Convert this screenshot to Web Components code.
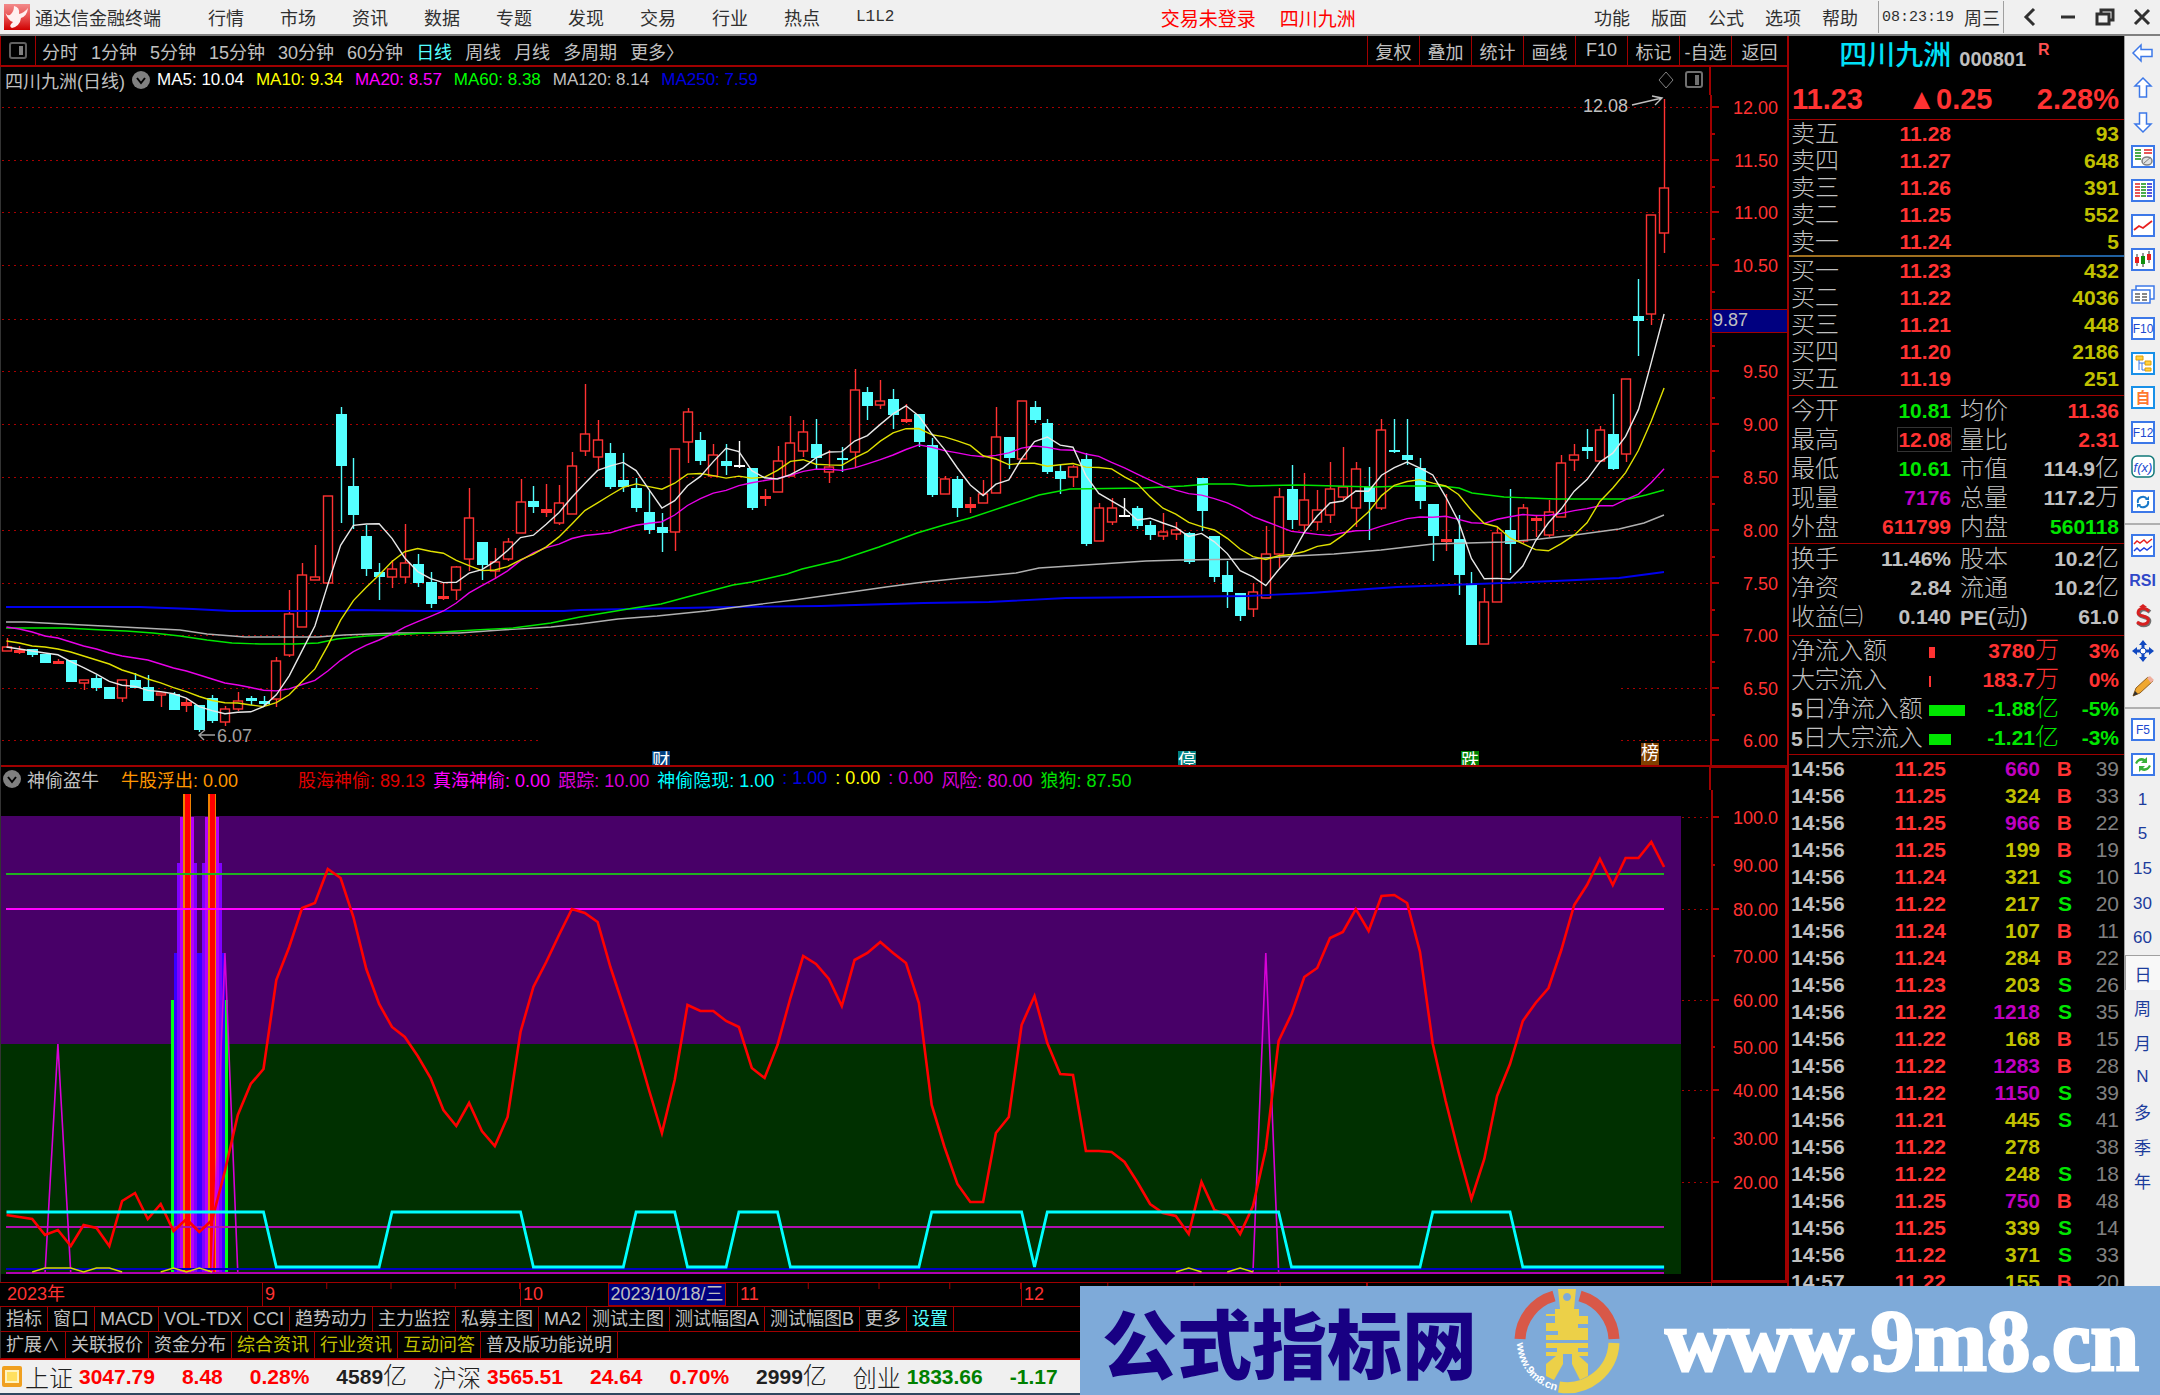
<!DOCTYPE html>
<html lang="zh-CN">
<head>
<meta charset="utf-8">
<title>通达信金融终端</title>
<style>
    html, body {
        margin: 0;
        height: 100%;
        background: #000;
    }
    body {
        font-family: "Liberation Sans", "Noto Sans CJK SC", sans-serif;
        font-size: 18px;
        color: #c0c0c0;
        overflow: hidden;
    }
</style>
</head>
<body>
<tdx-app>
    <app-menu slot="menu"></app-menu>
    <period-bar slot="chart"></period-bar>
    <price-chart slot="chart"></price-chart>
    <signal-chart slot="chart"></signal-chart>
    <date-axis slot="chart"></date-axis>
    <tab-strip slot="chart" items="指标,窗口,MACD,VOL-TDX,CCI,趋势动力,主力监控,私募主图,MA2,测试主图,测试幅图A,测试幅图B,更多,*设置"></tab-strip>
    <tab-strip slot="chart" items="扩展∧,关联报价,资金分布,+综合资讯,+行业资讯,+互动问答,普及版功能说明"></tab-strip>
    <quote-panel slot="quote"></quote-panel>
    <tool-rail slot="rail"></tool-rail>
    <index-bar slot="status"></index-bar>
    <site-banner slot="banner"></site-banner>
</tdx-app>

<script>
// 公共样式
const BASE = `
    :host, * { box-sizing: border-box; }
    * { margin: 0; padding: 0; }
    button { font: inherit; color: inherit; background: none; border: 0; white-space: nowrap; cursor: pointer; }
    a { color: inherit; text-decoration: none; }
    svg { display: block; }
`;

// 基类:子类提供 css() 和 html()
class BaseElement extends HTMLElement {
    constructor() {
        super();
        this.attachShadow({ mode: 'open' });
    }
    connectedCallback() {
        this.shadowRoot.innerHTML = `<style>${BASE}${this.css()}</style>${this.html()}`;
    }
}

// ---------- 整体布局 ----------
class TdxApp extends BaseElement {
    css() {
        return `
            :host { display: flex; flex-direction: column; height: 100vh; position: relative; overflow: hidden; }
            main { flex: 1; min-height: 0; display: grid; grid-template-columns: minmax(0, 1fr) 337px 36px; }
            .left { display: flex; flex-direction: column; min-height: 0; }
        `;
    }
    html() {
        return `
            <slot name="menu"></slot>
            <main>
                <div class="left"><slot name="chart"></slot></div>
                <slot name="quote"></slot>
                <slot name="rail"></slot>
            </main>
            <slot name="status"></slot>
            <slot name="banner"></slot>
        `;
    }
}

// ---------- 顶部菜单 ----------
class AppMenu extends BaseElement {
    css() {
        return `
            :host { display: flex; align-items: center; height: 36px; flex: none; background: #f0f0f0; color: #303030; border-bottom: 2px solid #808080; padding: 0 6px 0 4px; }
            .logo { width: 26px; height: 26px; margin-right: 5px; }
            .title { margin-right: 47px; white-space: nowrap; }
            nav { display: flex; gap: 36px; }
            .code { font-family: "Liberation Mono", monospace; font-size: 16px; }
            .login { flex: 1; display: flex; justify-content: center; gap: 24px; color: #f00; font-size: 19px; padding-left: 28px; }
            .right { gap: 21px; }
            .clock { display: flex; align-items: center; gap: 10px; margin-left: 20px; height: 32px; padding: 0 3px; border: solid #a0a0a0; border-width: 0 1px; white-space: nowrap; }
            .clock time { font-family: "Liberation Mono", monospace; font-size: 15px; }
            .win { display: flex; gap: 13px; margin-left: 15px; }
            .win button { width: 24px; height: 24px; }
            .win svg { fill: none; stroke: #303030; stroke-width: 3; }
        `;
    }
    html() {
        const btn = t => `<button>${t}</button>`;
        return `
            <svg class="logo" viewBox="0 0 26 26">
                <defs><linearGradient id="g" x2="0" y2="1"><stop offset="0" stop-color="#f28a8a"/><stop offset=".5" stop-color="#e85050"/><stop offset="1" stop-color="#d00000"/></linearGradient></defs>
                <rect width="26" height="26" fill="url(#g)"/>
                <path d="M1 7 Q2 12 6 11 Q10 8 10 2 Q16 3 15 10 Q20 9 24 4 Q23 12 17 14 Q16 22 8 24 Q4 22 9 18 Q3 16 1 7Z" fill="#fff0f0"/>
            </svg>
            <span class="title">通达信金融终端</span>
            <nav>${['行情', '市场', '资讯', '数据', '专题', '发现', '交易', '行业', '热点'].map(btn).join('')}<button class="code">L1L2</button></nav>
            <div class="login"><button>交易未登录</button><button>四川九洲</button></div>
            <nav class="right">${['功能', '版面', '公式', '选项', '帮助'].map(btn).join('')}</nav>
            <div class="clock"><time>08:23:19</time><span>周三</span></div>
            <div class="win">
                <button aria-label="后退"><svg viewBox="0 0 24 24"><path d="M15 4 L7 12 L15 20"/></svg></button>
                <button aria-label="最小化"><svg viewBox="0 0 24 24"><path d="M5 12 H19"/></svg></button>
                <button aria-label="还原"><svg viewBox="0 0 24 24"><path d="M4 9 H16 V19 H4Z M8 9 V5 H20 V15 H16"/></svg></button>
                <button aria-label="关闭"><svg viewBox="0 0 24 24"><path d="M5 5 L19 19 M19 5 L5 19"/></svg></button>
            </div>
        `;
    }
}

// ---------- 周期工具条 ----------
class PeriodBar extends BaseElement {
    css() {
        return `
            :host { display: flex; justify-content: space-between; height: 31px; flex: none; border: solid #a00000; border-width: 0 0 2px 1px; }
            .periods { display: flex; align-items: center; gap: 13px; }
            .panel { width: 35px; align-self: stretch; border-right: 1px solid #a00000; margin-right: -7px; display: grid; place-items: center; }
            .on { color: #54ffff; }
            .tools { display: flex; }
            .tools button { width: 52px; border-left: 1px solid #a00000; }
            .tools button:last-child { width: 56px; }
        `;
    }
    html() {
        const periods = ['分时', '1分钟', '5分钟', '15分钟', '30分钟', '60分钟', '日线', '周线', '月线', '多周期', '更多〉'];
        return `
            <div class="periods">
                <button class="panel" aria-label="侧栏"><svg width="20" height="18" viewBox="0 0 20 18"><rect x="2" y="1" width="16" height="15" rx="2" fill="none" stroke="#606060" stroke-width="2"/><path d="M11 4h4v9h-4z" fill="#808080"/></svg></button>
                ${periods.map(p => `<button class="${p === '日线' ? 'on' : ''}">${p}</button>`).join('')}
            </div>
            <div class="tools">${['复权', '叠加', '统计', '画线', 'F10', '标记', '-自选', '返回'].map(t => `<button>${t}</button>`).join('')}</div>
        `;
    }
}

// K线:[最高, 实体上沿, 实体下沿, 最低, 类型],均为画布纵坐标
// r 阳线空心 R 阳线小实体 c 阴线 w 平盘
const BARS = `638,647,651,651,r 646,650,652,654,R 649,649,654,657,c 654,654,662,662,c 659,661,663,664,R 660,660,681,681,c
680,680,683,690,r 675,678,687,691,c 687,687,698,698,c 680,680,698,702,r 673,680,687,687,c 675,687,700,700,c
693,693,695,707,r 692,694,709,709,c 698,702,705,712,R 705,705,729,732,c 695,698,720,723,c 706,709,722,726,r
692,701,709,711,r 696,698,700,705,c 696,701,703,706,c 657,661,699,707,r 590,614,655,657,r 563,575,627,627,r
545,577,580,580,r 496,496,583,583,r 407,414,465,523,c 458,486,514,529,c 525,536,568,576,c 563,572,576,600,c
560,569,577,588,r 524,563,577,583,r 554,564,582,587,c 572,582,603,608,c 583,596,598,600,R 566,567,590,600,r
488,518,559,571,r 542,542,564,580,c 548,562,571,579,r 538,542,559,561,r 479,502,533,533,r 486,501,506,513,c
484,509,512,517,R 485,503,523,525,r 452,466,514,514,r 384,434,451,456,r 420,440,457,469,r 443,453,486,489,c
453,480,486,492,c 478,488,507,512,c 491,512,529,534,c 513,527,532,552,c 449,449,532,551,r 408,412,442,463,r
432,440,460,465,c 444,455,476,476,r 444,461,465,475,c 441,465,466,468,w 468,468,507,510,c 489,496,498,506,R
446,461,492,492,r 416,443,476,476,r 420,432,451,457,r 419,444,457,470,c 450,467,472,483,r 447,458,459,472,c
369,390,452,468,r 387,392,405,420,c 380,401,405,409,r 389,399,414,429,c 404,419,421,423,R 414,414,441,447,c
438,445,494,497,c 476,479,494,494,r 476,479,507,517,c 497,504,507,513,R 480,494,503,503,r 407,437,493,493,r
437,437,457,469,c 401,401,459,459,r 401,407,419,423,c 419,423,471,474,c 465,471,478,494,c 465,467,477,487,r
453,459,543,546,c 503,508,541,541,r 498,508,522,525,r 498,515,516,516,w 506,508,525,529,c 521,525,534,540,c
513,532,536,540,r 522,530,534,540,r 532,533,561,564,c 478,478,510,531,c 536,536,576,582,c 561,575,591,608,c
593,593,615,621,c 583,592,609,617,r 526,554,598,598,r 488,497,554,568,r 465,489,519,529,c 473,500,525,531,r
490,510,522,530,r 462,489,515,523,r 447,487,497,500,r 462,469,508,527,r 467,487,501,540,c 419,430,508,510,r
419,450,451,453,c 419,455,459,465,c 458,468,500,509,c 504,504,535,561,c 494,539,541,551,R 515,539,574,595,c
572,585,644,644,c 588,602,644,644,r 527,533,602,602,r 489,530,543,573,c 504,508,541,543,r 515,518,520,537,R
500,512,535,537,r 455,463,517,517,r 444,455,460,471,r 429,447,450,459,c 426,430,461,461,r 394,434,468,470,c
379,379,454,462,r 279,316,320,356,c 215,215,314,325,r 99,188,233,253,r`.split(/\s+/).map(s => {
    const p = s.split(',');
    return { hi: +p[0], top: +p[1], bottom: +p[2], lo: +p[3], kind: p[4] };
});

const STEP = 12.85;
const barX = i => 6.5 + i * STEP;

// 由收盘价计算均线,lead 为前面不足周期的部分
function average(n, lead) {
    const close = BARS.map(b => b.kind === 'c' || b.kind === 'w' ? b.bottom : b.top);
    return close.map((_, i) => {
        const y = i < n - 1 ? lead[i] : close.slice(i - n + 1, i + 1).reduce((a, b) => a + b) / n;
        return `${barX(i).toFixed(1)},${y.toFixed(1)}`;
    }).join(' ');
}

const line = (points, color, width = 1.4) => `<polyline points="${points}" fill="none" stroke="${color}" stroke-width="${width}"/>`;

const CHART_CSS = `
    :host { display: flex; flex-direction: column; min-height: 0; border-left: 1px solid #333; }
    header { display: flex; flex: none; }
    .legend { flex: 1; display: flex; align-items: center; padding-left: 4px; white-space: nowrap; }
    .axis-top { width: 76px; }
    svg.plot { flex: 1; min-height: 0; width: 100%; overflow: hidden; }
    text { font-size: 18px; }
    .crisp { shape-rendering: crispEdges; }
`;
const CHEVRON = `<svg width="18" height="18" viewBox="0 0 18 18"><circle cx="9" cy="9" r="9" fill="#808080"/><path d="M5 7 L9 12 L13 7" fill="none" stroke="#000" stroke-width="2"/></svg>`;

// ---------- 主图 ----------
class PriceChart extends BaseElement {
    css() {
        return CHART_CSS + `
            :host { flex: 698 1 0; }
            header { height: 28px; }
            .legend { gap: 12px; font-size: 17px; padding-bottom: 2px; border-right: 2px solid #a00000; }
            .name { font-size: 18px; }
            .legend button { margin: 0 -5px; }
            .corner { margin-left: auto; display: flex; gap: 9px; padding-right: 5px; }
        `;
    }
    grid() {
        const levels = [['12.00', 107], ['11.50', 160], ['11.00', 212], ['10.50', 265], ['', 319], ['9.50', 371], ['9.00', 424], ['8.50', 477], ['8.00', 530], ['7.50', 583], ['7.00', 635], ['6.50', 688], ['6.00', 740]];
        return levels.map(([label, y]) => {
            const d = y < 650 ? `M2 ${y}H1710` : `M2 ${y}H538 M1621 ${y}H1710`;
            return `<path class="crisp" d="${d}" stroke="#a80000" stroke-width="1" stroke-dasharray="2 4"/>
                <path class="crisp" d="M1711 ${y}h8 M1711 ${y + 27}h4" stroke="#b00000" stroke-width="2"/>
                ${label ? `<text x="1778" y="${y + 7}" text-anchor="end" fill="#ff3232">${label}</text>` : ''}`;
        }).join('');
    }
    bars() {
        const colors = { r: '#ff3232', R: '#ff3232', c: '#54ffff', w: '#fff' };
        return BARS.map((b, i) => {
            const x = Math.round(barX(i));
            const c = colors[b.kind];
            const h = Math.max(b.bottom - b.top, 1);
            const body = b.kind === 'r'
                ? `<rect x="${x - 4.5}" y="${b.top}" width="9" height="${h}" fill="#000" stroke="${c}" stroke-width="1.4"/>`
                : `<rect x="${x - 5}" y="${b.top}" width="11" height="${h + 1}" fill="${c}"/>`;
            return `<path d="M${x + .5} ${b.hi}V${b.lo}" stroke="${c}" stroke-width="1.4"/>${body}`;
        }).join('');
    }
    html() {
        const mas = [['MA5: 10.04', '#fff'], ['MA10: 9.34', '#ff0'], ['MA20: 8.57', '#f0f'], ['MA60: 8.38', '#0f0'], ['MA120: 8.14', '#c0c0c0'], ['MA250: 7.59', '#0000e0']];
        const marks = [['财', 652, 751, '#00407f'], ['停', 1178, 751, '#008080'], ['跌', 1461, 751, '#008000'], ['榜', 1641, 743, '#804000']];
        return `
            <header>
                <div class="legend">
                    <span class="name">四川九洲(日线)</span><button aria-label="展开">${CHEVRON}</button>
                    ${mas.map(([t, c]) => `<span style="color:${c}">${t}</span>`).join('')}
                    <div class="corner">
                        <svg width="18" height="20" viewBox="0 0 18 20"><path d="M9 2 L16 10 L9 18 L2 10Z" fill="none" stroke="#808080"/></svg>
                        <svg width="20" height="20" viewBox="0 0 20 20"><rect x="2" y="2" width="16" height="15" rx="2" fill="none" stroke="#707070" stroke-width="2"/><path d="M11 5h4v10h-4z" fill="#707070"/></svg>
                    </div>
                </div>
                <div class="axis-top"></div>
            </header>
            <svg class="plot" viewBox="1 95 1786 670">
                ${this.grid()}
                <path class="crisp" d="M1711 95V765" stroke="#a00000" stroke-width="2"/>
                ${this.bars()}
                ${line('6,607 140,607 193,609 231,611 346,611 352,610 425,611 564,611 580,610 733,607 821,606 924,603 989,602 1066,598 1156,597 1247,596 1310,593 1397,587 1476,584 1555,581 1619,578 1664,572', '#0000ee', 1.8)}
                ${line('6,622 25,622 63,624 103,626 142,628 180,630 207,634 245,637 318,637 344,635 398,633 459,633 501,630 551,627 580,624 618,619 657,616 706,611 745,606 794,600 844,593 886,587 924,582 963,578 1016,573 1039,568 1085,565 1146,561 1180,560 1251,559 1294,556 1334,554 1381,550 1433,544 1504,542 1540,539 1575,535 1619,529 1644,523 1664,515', '#b0b0b0')}
                ${line('6,628 65,628 103,630 126,631 153,633 180,636 207,640 232,643 260,644 295,644 318,643 337,639 367,636 409,634 475,630 513,628 551,623 580,617 616,611 634,608 661,604 687,597 733,585 752,582 787,574 802,569 840,560 879,547 917,533 944,525 970,518 1009,505 1039,495 1070,489 1143,488 1184,486 1209,484 1233,484 1249,486 1298,485 1374,487 1405,486 1441,486 1459,488 1472,493 1504,497 1555,499 1629,499 1646,495 1664,490', '#00e600')}
                ${line(average(20, [627, 629, 632, 636, 638, 642, 646, 649, 653, 656, 658, 660, 664, 668, 671, 675, 679, 683, 685]), '#e800e8')}
                ${line(average(10, [641, 643, 646, 647, 649, 652, 656, 660, 664]), '#e0e000')}
                ${line(average(5, [647, 649, 651, 653]), '#e8e8e8')}
                <text x="1583" y="112" fill="#c0c0c0">12.08</text>
                <path d="M1632 105 L1662 98 M1652 96 L1662 98 L1655 105" fill="none" stroke="#c0c0c0" stroke-width="1.4"/>
                <text x="217" y="742" fill="#a0a0a0">6.07</text>
                <path d="M215 735 H199 M205 730 L199 735 L204 740" fill="none" stroke="#a0a0a0" stroke-width="1.4"/>
                <rect class="crisp" x="1711" y="309" width="77" height="23" fill="#000080" stroke="#a00000"/>
                <text x="1713" y="326" fill="#c0c0c0">9.87</text>
                ${marks.map(([t, x, y, c]) => `<rect x="${x}" y="${y}" width="18" height="22" fill="${c}"/><text x="${x}" y="${y + 16}" fill="#fff">${t}</text>`).join('')}
            </svg>
        `;
    }
}

// ---------- 副图指标 ----------
const TREND = [1215, 1217, 1219, 1235, 1230, 1246, 1225, 1228, 1246, 1201, 1193, 1219, 1204, 1231, 1219, 1232, 1220, 1171, 1115, 1084,
    1069, 980, 947, 908, 903, 869, 878, 917, 969, 1004, 1027, 1037, 1056, 1078, 1110, 1126, 1103, 1131, 1146, 1117,
    1032, 987, 962, 935, 909, 913, 922, 967, 1006, 1045, 1090, 1133, 1080, 1005, 1011, 1011, 1021, 1027, 1068, 1078,
    1045, 998, 956, 964, 979, 1006, 960, 953, 942, 953, 963, 1003, 1105, 1147, 1184, 1202, 1202, 1133, 1117, 1025,
    996, 1043, 1074, 1075, 1151, 1151, 1152, 1162, 1182, 1204, 1213, 1216, 1234, 1182, 1210, 1215, 1234, 1206, 1149, 1041,
    1014, 977, 968, 938, 932, 909, 931, 896, 895, 903, 952, 1044, 1101, 1152, 1199, 1159, 1096, 1064, 1021, 1003,
    988, 950, 905, 885, 859, 885, 858, 858, 842, 867];
// 神偷隐现为高位的区间(K线序号)
const HIGH_RANGES = [[0, 20], [30, 40], [49, 52], [57, 60], [72, 79], [81, 99], [111, 117]];

class SignalChart extends BaseElement {
    css() {
        return CHART_CSS + `
            :host { flex: 517 1 0; }
            header { height: 25px; border-top: 2px solid #a00000; }
            .legend { gap: 8px; border-right: 2px solid #a00000; padding-left: 2px; }
            .legend button { margin-right: -2px; }
            .first { margin: 0 52px 0 14px; }
            .axis-top { border-top: 1px solid #a00000; border-right: 2px solid #a00000; }
        `;
    }
    switchLine() {
        return TREND.map((_, i) => {
            const on = HIGH_RANGES.some(([a, b]) => i >= a && i <= b);
            return `${barX(i).toFixed(1)},${on ? 1212 : 1267}`;
        }).join(' ');
    }
    spikes() {
        return [[4, 1044], [17, 953], [98, 953]].map(([i, y]) =>
            line(`${barX(i - 1)},1273 ${barX(i)},${y} ${barX(i + 1)},1273`, '#d800d8', 1.6)).join('');
    }
    columns() {
        const r = (x, y, w, c) => `<rect x="${x}" y="${y}" width="${w}" height="${1274 - y}" fill="${c}"/>`;
        return r(171, 1000, 57, '#00ff18') + r(174, 953, 51, '#3800ff') +
            [187, 212].map(x => r(x - 10, 863, 20, '#8000ff') + r(x - 7, 817, 14, '#b800f8') + r(x - 4, 794, 8, '#f08000') + r(x - 2, 794, 5, '#ff0000')).join('');
    }
    html() {
        const items = [['牛股浮出: 0.00', '#ff9600', 'first'], ['股海神偷: 89.13', '#e00000'], ['真海神偷: 0.00', '#f0f'], ['跟踪: 10.00', '#d800d8'], ['神偷隐现: 1.00', '#0ff'], [': 1.00', '#0000e0'], [': 0.00', '#ff0'], [': 0.00', '#d800d8'], ['风险: 80.00', '#d800d8'], ['狼狗: 87.50', '#00e000']];
        const axis = [['100.0', 817], ['90.00', 865], ['80.00', 909], ['70.00', 956], ['60.00', 1000], ['50.00', 1047], ['40.00', 1090], ['30.00', 1138], ['20.00', 1182]];
        const bumps = [[[2, 0], [3, 1], [5, 1], [6, 0], [7, 1], [8, 1], [9, 0]], [[12, 0], [13, 1], [14, 0], [15, 1], [16, 0]], [[91, 0], [92, 1], [93, 0]], [[95, 0], [96, 1], [97, 0]]];
        return `
            <header>
                <div class="legend"><button aria-label="展开">${CHEVRON}</button><span>神偷盗牛</span>
                ${items.map(([t, c, k]) => `<span class="${k || ''}" style="color:${c}">${t}</span>`).join('')}</div>
                <div class="axis-top"></div>
            </header>
            <svg class="plot" viewBox="1 790 1786 492">
                <path d="M1 816H1681V1044H1" fill="#480068"/>
                <path d="M1 1044H1681V1274H1" fill="#003000"/>
                ${axis.map(([t, y], i) => `<path class="crisp" d="M1711 ${y}h${i % 2 ? 4 : 8}" stroke="#b00000" stroke-width="2"/>
                    ${i % 2 ? '' : `<path class="crisp" d="M1682 ${y}H1710" stroke="#a80000" stroke-dasharray="2 4"/>`}
                    <text x="1778" y="${y + 7}" text-anchor="end" fill="#ff3232">${t}</text>`).join('')}
                ${this.columns()}
                <g class="crisp" fill="none">
                    <path d="M6 874H1664" stroke="#20b020" stroke-width="2"/>
                    <path d="M6 909H1664" stroke="#f0f" stroke-width="2"/>
                    <path d="M6 1227H1664" stroke="#b010b0" stroke-width="2"/>
                </g>
                ${this.spikes()}
                <path class="crisp" d="M6 1269H1664" stroke="#0000c0" stroke-width="2"/>
                <path class="crisp" d="M6 1273H1664" stroke="#b000b0" stroke-width="2"/>
                ${bumps.map(b => line(b.map(([i, on]) => `${barX(i)},${on ? 1268 : 1272}`).join(' '), '#d8d800')).join('')}
                ${line(TREND.map((y, i) => `${barX(i).toFixed(1)},${y}`).join(' '), '#ff0000', 2.6)}
                ${line(this.switchLine(), '#00ffff', 2.8)}
                <path class="crisp" d="M1712 790V1281H1786V790" fill="none" stroke="#a00000" stroke-width="2"/>
            </svg>
        `;
    }
}

// ---------- 日期轴 ----------
class DateAxis extends BaseElement {
    css() {
        return `
            :host { display: grid; grid-template-columns: 262px 258px 88px 118px 11px 284px 346px 1fr 76px; height: 25px; flex: none; border: solid #a00000; border-width: 1px 0; color: #ff3232; line-height: 23px; }
            span { border-left: 1px solid #a00000; padding-left: 2px; }
            .start { border: 0; padding-left: 7px; }
            .gap { border: 0; }
            .weeks { background: linear-gradient(90deg, transparent calc(100% - 1px), #a00000 0) 0 0 / 25% 6px repeat-x; }
            .cursor { border: 1px solid #a00000; background: #000080; color: #c0c0c0; line-height: 20px; padding: 0; white-space: nowrap; text-align: center; }
        `;
    }
    html() {
        return `<span class="start">2023年</span><span class="weeks">9</span><span>10</span><span class="cursor">2023/10/18/三</span><span class="gap"></span><span class="weeks">11</span><span class="weeks">12</span><span></span><span></span>`;
    }
}

// ---------- 标签条,* 为选中,+ 为高亮 ----------
class TabStrip extends BaseElement {
    css() {
        return `
            :host { display: flex; height: 25px; flex: none; border-bottom: 1px solid #a00000; border-left: 1px solid #333; }
            :host(:last-of-type) { height: 27px; }
            button { padding: 0 5px; border-right: 1px solid #a00000; line-height: 24px; }
            .on { color: #54ffff; }
            .hot { color: #c0c000; }
        `;
    }
    html() {
        return this.getAttribute('items').split(',').map(t => {
            const cls = t[0] === '*' ? 'on' : t[0] === '+' ? 'hot' : '';
            return `<button class="${cls}">${t.replace(/^[*+]/, '')}</button>`;
        }).join('');
    }
}

// ---------- 右侧报价 ----------
class QuotePanel extends BaseElement {
    css() {
        return `
            :host { display: block; min-height: 0; overflow: hidden; border-left: 2px solid #a00000; }
            .head { height: 84px; padding: 0 5px 0 3px; border-bottom: 1px solid #a00000; }
            h1 { display: flex; justify-content: center; align-items: flex-start; gap: 8px; height: 43px; padding-right: 22px; font-size: 28px; line-height: 40px; font-weight: 500; color: #00e0f8; }
            h1 small { font-size: 20px; line-height: 46px; font-weight: bold; color: #c0c0c0; }
            h1 sup { font-size: 16px; line-height: 28px; color: #ff5050; font-weight: bold; margin-left: 4px; }
            .last { display: flex; justify-content: space-between; font-size: 29px; line-height: 40px; font-weight: bold; color: #ff3232; }
            table { width: 100%; border-collapse: collapse; table-layout: fixed; font-size: 21px; font-weight: bold; }
            th { font-size: 24px; font-weight: 300; text-align: left; padding-left: 2px; white-space: nowrap; }
            th b { font-size: 21px; font-weight: bold; }
            td { text-align: right; white-space: nowrap; }
            tr { height: 27px; line-height: 27px; }
            td:last-child { padding-right: 5px; }
            i { font-style: normal; font-weight: 300; font-size: 24px; line-height: 20px; }
            .tall tr { height: 29px; }
            .second { padding-left: 9px; }
            .sec { border-bottom: 1px solid #a00000; padding-bottom: 2px; }
            .wide { padding-bottom: 4px; }
            .mid { height: 2px; margin: 0; background: linear-gradient(90deg, #a07020 81%, #2060a0 81%); }
            .buy { padding-bottom: 3px; }
            .r { color: #ff3232; } .g { color: #00e600; } .y { color: #c0c000; } .m { color: #c000c0; } .k { color: #808080; font-weight: normal; }
            .box { outline: 1px solid #333; }
            .bar { text-align: left; }
            .bar b { display: inline-block; height: 11px; vertical-align: middle; background: currentColor; }
            .flow th { color: #c0c0c0; }
            .time { text-align: left; padding-left: 2px; }
        `;
    }
    html() {
        const depth = rows => `<table><colgroup><col style="width:60px"><col style="width:102px"><col></colgroup>${rows.map(([n, p, v]) => `<tr><th>${n}</th><td class="r">${p}</td><td class="y">${v}</td></tr>`).join('')}</table>`;
        const unit = s => s.replace(/[亿万]/, '<i>$&</i>');
        const stats = rows => `<table class="tall"><colgroup><col style="width:80px"><col style="width:82px"><col style="width:80px"><col></colgroup>${rows.map(([a, b, bc, c, d, dc, box]) =>
            `<tr><th>${a}</th><td class="${bc}">${box ? `<span class="box">${b}</span>` : b}</td><th class="second">${c.replace('PE', '<b>PE</b>')}</th><td class="${dc}">${unit(d)}</td></tr>`).join('')}</table>`;
        const flows = [['净流入额', 6, '3780万', '3%', 'r'], ['大宗流入', 2, '183.7万', '0%', 'r'], ['<b>5</b>日净流入额', 36, '-1.88亿', '-5%', 'g'], ['<b>5</b>日大宗流入', 22, '-1.21亿', '-3%', 'g']];
        const ticks = `11.25 660 B 39,11.25 324 B 33,11.25 966 B 22,11.25 199 B 19,11.24 321 S 10,11.22 217 S 20,11.24 107 B 11,11.24 284 B 22,11.23 203 S 26,11.22 1218 S 35,11.22 168 B 15,11.22 1283 B 28,11.22 1150 S 39,11.21 445 S 41,11.22 278 - 38,11.22 248 S 18,11.25 750 B 48,11.25 339 S 14,11.22 371 S 33,11.22 155 B 20`.split(',').map(s => s.split(' '));
        return `
            <div class="head">
                <h1>四川九洲<small>000801</small><sup>R</sup></h1>
                <div class="last"><span>11.23</span><span>▲0.25</span><span>2.28%</span></div>
            </div>
            ${depth([['卖五', '11.28', 93], ['卖四', '11.27', 648], ['卖三', '11.26', 391], ['卖二', '11.25', 552], ['卖一', '11.24', 5]])}
            <div class="mid"></div>
            <div class="sec buy">${depth([['买一', '11.23', 432], ['买二', '11.22', 4036], ['买三', '11.21', 448], ['买四', '11.20', 2186], ['买五', '11.19', 251]])}</div>
            <div class="sec">${stats([
                ['今开', '10.81', 'g', '均价', '11.36', 'r'],
                ['最高', '12.08', 'r', '量比', '2.31', 'r', true],
                ['最低', '10.61', 'g', '市值', '114.9亿', ''],
                ['现量', '7176', 'm', '总量', '117.2万', ''],
                ['外盘', '611799', 'r', '内盘', '560118', 'g']])}</div>
            <div class="sec wide">${stats([
                ['换手', '11.46%', '', '股本', '10.2亿', ''],
                ['净资', '2.84', '', '流通', '10.2亿', ''],
                ['收益㈢', '0.140', '', 'PE(动)', '61.0', '']])}</div>
            <div class="sec"><table class="tall flow"><colgroup><col style="width:140px"><col style="width:38px"><col style="width:92px"><col></colgroup>
                ${flows.map(([n, w, v, p, c]) => `<tr class="${c}"><th>${n}</th><td class="bar"><b style="width:${w}px"></b></td><td>${unit(v)}</td><td>${p}</td></tr>`).join('')}
            </table></div>
            <table><colgroup><col style="width:60px"><col style="width:97px"><col style="width:94px"><col style="width:32px"><col></colgroup>
                ${ticks.map(([p, v, s, n], i) => `<tr><td class="time">${i < 19 ? '14:56' : '14:57'}</td><td class="r">${p}</td><td class="${v > 500 ? 'm' : 'y'}">${v}</td><td class="${s === 'B' ? 'r' : 'g'}">${s === '-' ? '' : s}</td><td class="k">${n}</td></tr>`).join('')}
            </table>
        `;
    }
}

// ---------- 工具栏 ----------
const frame = (inner, stroke = '#3c78e8') => `<svg width="24" height="24" viewBox="0 0 24 24"><rect x="1" y="1" width="22" height="21" fill="#fff" stroke="${stroke}" stroke-width="2"/>${inner}</svg>`;
const glyph = t => frame(`<text x="12" y="16" text-anchor="middle" font-size="12" fill="#2048d0">${t}</text>`);
const arrow = deg => `<svg width="24" height="24" viewBox="0 0 24 24"><path transform="rotate(${deg} 12 12)" d="M2 12 L10 4 V8.500 H21 V15.500 H10 V20Z" fill="#fff" stroke="#3c78e8" stroke-width="1.500"/></svg>`;
const rows = (x, c) => [5, 8, 11, 14, 17].map(y => `<path d="M${x} ${y}h5" stroke="${c}" stroke-width="1.500"/>`).join('');

const RAIL = [
    [
        ['后退', arrow(0)], ['上一只', arrow(90)], ['下一只', arrow(270)],
        ['报价', frame(`<path d="M4 5h6M4 8h6M4 11h6M4 14h6" stroke="#109010" stroke-width="1.500"/><path d="M13 5h8M13 8h8" stroke="#e02020" stroke-width="1.500"/><ellipse cx="16" cy="16" rx="5" ry="4" fill="#e0e0e0" stroke="#808080" stroke-width="1.500"/><path d="M13 18 L20 12" stroke="#808080"/>`)],
        ['列表', frame(rows(4, '#e02020') + rows(10, '#109010') + rows(16, '#2020d0'))],
        ['分时图', frame(`<path d="M3 16 L8 12 L12 14 L21 7" fill="none" stroke="#e82020" stroke-width="1.800"/>`)],
        ['K线图', frame(`<path d="M6 6v12M12 5v14M18 3v12" stroke="#333" stroke-width="1"/><path d="M4 9h4v6H4zM16 6h4v6h-4z" fill="#e82020"/><path d="M10 8h4v8h-4z" fill="#109010"/>`)],
        ['多窗口', `<svg width="24" height="24" viewBox="0 0 24 24"><path d="M5 3h18v13H5z" fill="#fff" stroke="#3c78e8" stroke-width="1.500"/><path d="M1 7h18v13H1z" fill="#fff" stroke="#3c78e8" stroke-width="1.500"/><path d="M4 11h5M4 14h5M4 17h5M11 11h5M11 14h5M11 17h5" stroke="#606060" stroke-width="1.500"/></svg>`],
        ['F10资料', glyph('F10')],
        ['关联', frame(`<path d="M5 4h7v4H5zM14 9h6v4h-6zM14 16h6v3h-6z" fill="#ffd040" stroke="#e0a000"/><path d="M8 8v10M8 11h6M11 11v7h3" fill="none" stroke="#3c78e8"/>`, '#1890e8')],
        ['自选', frame(`<text x="12" y="17" text-anchor="middle" font-size="15" font-weight="bold" fill="#ff7830">自</text>`, '#1890e8')],
        ['F12交易', glyph('F12')],
        ['公式', `<svg width="24" height="24" viewBox="0 0 24 24"><rect x="1" y="1" width="22" height="21" rx="5" fill="#fff" stroke="#107878" stroke-width="1.500"/><text x="12" y="17" text-anchor="middle" font-size="13" font-style="italic" fill="#2048d0">f(x)</text></svg>`],
        ['刷新图', frame(`<path d="M7 13a5 5 0 0 1 9 -4M17 11a5 5 0 0 1 -9 4" fill="none" stroke="#1878c8" stroke-width="2"/><path d="M14 10h4V6zM10 14H6v4z" fill="#1878c8"/>`)],
    ], [
        ['叠加', frame(`<path d="M3 10l3-3 3 2 4-3 3 3 5-4" fill="none" stroke="#e82020" stroke-width="1.500"/><path d="M3 17l3-3 3 3 4-3 3 2 5-4" fill="none" stroke="#2040e0" stroke-width="1.500"/>`)],
        ['RSI指标', `<span class="rsi">RSI</span>`],
        ['资金', `<svg width="24" height="24" viewBox="0 0 24 24"><path d="M19 8 Q13 3 9 7 Q6 12 13 13 Q21 15 17 20 Q12 23 7 19" fill="none" stroke="#707070" stroke-width="4"/><path d="M18 7 Q12 2 8 6 Q5 11 12 12 Q20 14 16 19 Q11 22 6 18" fill="none" stroke="#d82020" stroke-width="3"/><path d="M8 3l4-3 4 3z" fill="#d82020"/></svg>`],
        ['移动', `<svg width="24" height="24" viewBox="0 0 24 24"><path d="M12 1l4 5H8zM12 23l4-5H8zM1 12l5-4v8zM23 12l-5-4v8z" fill="#1048c0"/><path d="M12 5v14M5 12h14" stroke="#1048c0" stroke-width="3"/><circle cx="12" cy="12" r="3" fill="#fff" stroke="#1048c0"/></svg>`],
        ['画线', `<svg width="24" height="24" viewBox="0 0 24 24"><path d="M2 22l3-8L17 3l5 4L9 19z" fill="#f0a830" stroke="#906020"/><path d="M16 4l3-2 4 4-3 3z" fill="#f0b0a0"/><path d="M2 22l2-5 3 3z" fill="#303030"/></svg>`],
    ], [
        ['F5切换', glyph('F5')],
        ['刷新', frame(`<path d="M4 10q4-7 10-4l2-2v6h-6l2-2q-4-1-6 3zM20 13q-4 7-10 4l-2 2v-6h6l-2 2q4 1 6-3z" fill="#38b038"/>`)],
        ...['1', '5', '15', '30', '60', '日', '周', '月', 'N', '多', '季', '年'].map(t => [t, t]),
    ],
];

class ToolRail extends BaseElement {
    css() {
        return `
            :host { display: block; background: #f0f0f0; color: #1c3c9c; border-left: 1px solid #a0a0a0; font-size: 17px; }
            .group { display: grid; grid-auto-rows: 1fr; height: 483px; }
            .group.short { height: 180px; }
            .group + .group { border-top: 2px solid #b0b0b0; margin-top: 4px; padding-top: 4px; }
            .group.short + .group { height: 491px; }
            button { display: grid; place-items: center; }
            .on { border: solid #a0a0a0; border-width: 1px 0 0 1px; background: #f8f8f8; }
            .rsi { font-size: 16px; font-weight: bold; color: #3048c8; }
        `;
    }
    html() {
        return RAIL.map((g, i) => `<div class="group ${i === 1 ? 'short' : ''}">${g.map(([name, body]) =>
            `<button aria-label="${name}" class="${name === '日' ? 'on' : ''}">${body}</button>`).join('')}</div>`).join('');
    }
}

// ---------- 底部指数 ----------
class IndexBar extends BaseElement {
    css() {
        return `
            :host { display: flex; align-items: center; height: 36px; flex: none; background: #f0f0f0; color: #202020; font-size: 21px; font-weight: bold; border-top: 1px solid #c00000; border-bottom: 2px solid #304860; padding-left: 2px; white-space: nowrap; }
            svg { margin-right: 3px; }
            .idx { display: flex; align-items: center; gap: 27px; margin-right: 26px; }
            .name { font-size: 24px; font-weight: 300; margin-right: -21px; }
            i { font-style: normal; font-weight: 300; font-size: 24px; line-height: 20px; }
            .up { color: #f00; }
            .down { color: #008000; }
        `;
    }
    html() {
        const idx = [['上证', 'up', ['3047.79', '8.48', '0.28%'], '4589'], ['沪深', 'up', ['3565.51', '24.64', '0.70%'], '2999'], ['创业', 'down', ['1833.66', '-1.17']]];
        return `
            <svg width="20" height="22" viewBox="0 0 20 22"><rect width="20" height="21" rx="2" fill="#f0a020"/><path d="M4 5h12v11H4z" fill="#ffe060" stroke="#fff4c0" stroke-width="2"/></svg>
            ${idx.map(([n, c, v, total]) => `<div class="idx"><span class="name">${n}</span>${v.map(t => `<span class="${c}">${t}</span>`).join('')}${total ? `<span>${total}<i>亿</i></span>` : ''}</div>`).join('')}
        `;
    }
}

// ---------- 站点横幅(浮在页面右下角) ----------
class SiteBanner extends BaseElement {
    css() {
        return `
            :host { position: absolute; right: 0; bottom: 0; width: 50%; height: 109px; background: #7eaad9; display: flex; align-items: center; justify-content: space-between; padding: 0 21px 0 22px; white-space: nowrap; }
            strong { font: 900 75px/100px "Noto Sans CJK SC", sans-serif; color: #180083; }
            a { font: bold 87px/100px "Liberation Serif", serif; color: #fff; -webkit-text-stroke: 3px #fff; }
            svg { margin-right: 8px; }
        `;
    }
    html() {
        return `
            <strong>公式指标网</strong>
            <svg width="106" height="106" viewBox="0 0 106 106">
                <g fill="none" stroke-width="11">
                    <path d="M6 51 A47 47 0 0 1 40 8" stroke="#d85848"/>
                    <path d="M66 8 A47 47 0 0 1 100 51" stroke="#d85848"/>
                    <path d="M100 55 A47 47 0 0 1 45 99" stroke="#ecd048"/>
                </g>
                <path fill="#ecd048" fill-rule="evenodd" d="M44 1H62L60 21H65V28H74V36H64V40H74V52H32V47H44V43H32V35H41V28H32V26H41V21H46ZM53 5a4 4 0 1 0 .1 0ZM32 55H74V60H64V64H74V68H65L74 76V88L66 92L58 76V66H49V76L40 92L32 88V76L42 68H32V64H43V60H32Z"/>
                <path id="arc" d="M3 55 A50 50 0 0 0 44 103" fill="none"/>
                <text font-size="11" font-weight="bold" fill="#fff" font-family="Liberation Sans"><textPath href="#arc">www.9m8.cn</textPath></text>
            </svg>
            <a href="#">www.9m8.cn</a>
        `;
    }
}

customElements.define('tdx-app', TdxApp);
customElements.define('app-menu', AppMenu);
customElements.define('period-bar', PeriodBar);
customElements.define('price-chart', PriceChart);
customElements.define('signal-chart', SignalChart);
customElements.define('date-axis', DateAxis);
customElements.define('tab-strip', TabStrip);
customElements.define('quote-panel', QuotePanel);
customElements.define('tool-rail', ToolRail);
customElements.define('index-bar', IndexBar);
customElements.define('site-banner', SiteBanner);
</script>
</body>
</html>
